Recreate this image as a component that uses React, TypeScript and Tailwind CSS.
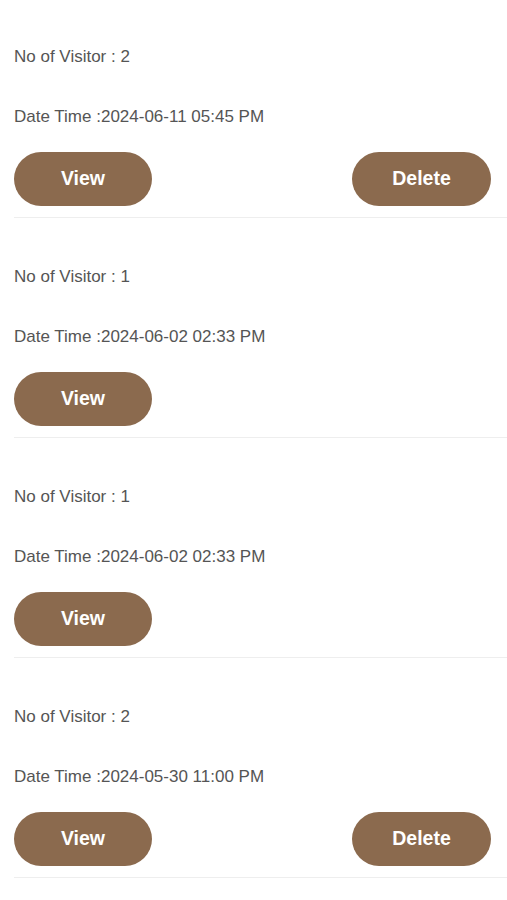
import React from "react";

type Entry = { visitors: number; dateTime: string; canDelete: boolean };

const entries: Entry[] = [
  { visitors: 2, dateTime: "2024-06-11 05:45 PM", canDelete: true },
  { visitors: 1, dateTime: "2024-06-02 02:33 PM", canDelete: false },
  { visitors: 1, dateTime: "2024-06-02 02:33 PM", canDelete: false },
  { visitors: 2, dateTime: "2024-05-30 11:00 PM", canDelete: true },
];

function Pill({ label, className = "" }: { label: string; className?: string }) {
  return (
    <button
      className={`h-[54px] rounded-[27px] bg-[#8b6a4e] text-[19.5px] font-bold text-white ${className}`}
    >
      {label}
    </button>
  );
}

export default function App() {
  return (
    <div
      className="min-h-[900px] w-full bg-white"
      style={{ fontFamily: '"Liberation Sans", Arial, sans-serif' }}
    >
      <div className="-mt-[2px]">
        {entries.map((e, i) => (
          <div key={i} className="ml-[14px] border-b border-[#eeeeee] pt-[47px] pb-[11px]">
            <p className="text-[17px] leading-[24px] text-[#555555]">No of Visitor : {e.visitors}</p>
            <p className="mt-[36px] text-[17px] leading-[24px] text-[#555555]">Date Time :{e.dateTime}</p>
            <div className="mt-[23px] flex items-start justify-between pr-[16px]">
              <Pill label="View" className="w-[138px]" />
              {e.canDelete && <Pill label="Delete" className="w-[139px]" />}
            </div>
          </div>
        ))}
      </div>
    </div>
  );
}
